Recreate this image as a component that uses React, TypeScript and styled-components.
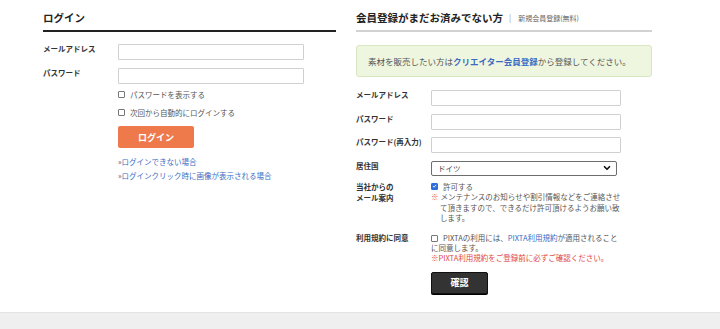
import React from "react";
import styled, { createGlobalStyle } from "styled-components";
import { ChevronDown } from "lucide-react";

const Global = createGlobalStyle`
  html, body { margin: 0; padding: 0; background: #fff; }
  body { font-family: "Noto Sans CJK JP", "Noto Sans", sans-serif; color: #333; }
  * { box-sizing: border-box; }
`;

const Page = styled.div`
  width: 720px;
  min-height: 329px;
  display: flex;
  flex-direction: column;
`;

const Main = styled.main`
  display: flex;
  align-items: flex-start;
  gap: 20px;
  padding: 0 0 18px 43px;
`;

const Column = styled.section<{ $w: number }>`
  width: ${(p) => p.$w}px;
  display: flex;
  flex-direction: column;
`;

const Heading = styled.h2<{ $line: string }>`
  margin: 0;
  padding-top: 6px;
  height: 32px;
  line-height: 24px;
  font-size: 10.5px;
  font-weight: 700;
  color: #222;
  border-bottom: 2px solid ${(p) => p.$line};
  display: flex;
  align-items: center;
  white-space: nowrap;
`;

const Sep = styled.span`
  color: #999;
  font-weight: 400;
  font-size: 8px;
  margin: 0 7px 0 6px;
`;

const Sub = styled.span`
  color: #666;
  font-weight: 400;
  font-size: 7px;
`;

const LoginForm = styled.div`
  margin-top: 12px;
  display: grid;
  grid-template-columns: 75px 186px;
  row-gap: 8px;
`;

const Label = styled.label<{ $shift?: number }>`
  font-size: 7.5px;
  line-height: 10px;
  font-weight: 700;
  color: #333;
  white-space: nowrap;
  margin-top: ${(p) => p.$shift ?? 0}px;
`;

const Input = styled.input<{ $w: number }>`
  display: block;
  width: ${(p) => p.$w}px;
  height: 16px;
  border: 1px solid #d0d0d0;
  border-radius: 1px;
  background: #fff;
  padding: 0 4px;
  font-size: 8px;
  outline: none;
`;

const CheckList = styled.div`
  grid-column: 2;
  display: flex;
  flex-direction: column;
  gap: 6px;
  margin-top: -4px;
`;

const CheckRow = styled.label`
  display: flex;
  align-items: center;
  gap: 5px;
  height: 12px;
  font-size: 7.5px;
  color: #555;
  white-space: nowrap;
`;

const Box = styled.span<{ $checked?: boolean }>`
  width: 7px;
  height: 7px;
  flex: none;
  border-radius: 1px;
  border: 1px solid ${(p) => (p.$checked ? "#2f6fdc" : "#777")};
  background: ${(p) => (p.$checked ? "#2f6fdc" : "#fff")};
  display: inline-flex;
  align-items: center;
  justify-content: center;
`;

const LoginButton = styled.button`
  grid-column: 2;
  width: 76px;
  height: 22px;
  border: none;
  border-radius: 2px;
  background: #ee7a4c;
  color: #fff;
  font-family: inherit;
  font-size: 9px;
  font-weight: 700;
  padding: 0;
`;

const Links = styled.div`
  grid-column: 2;
  display: flex;
  flex-direction: column;
  margin-top: -1px;
`;

const HelpLink = styled.a`
  font-size: 7.5px;
  line-height: 14px;
  color: #3a6cc4;
  text-decoration: none;
  white-space: nowrap;
  &::before { content: "»"; color: #555; }
`;

const Notice = styled.div`
  margin-top: 13px;
  height: 32px;
  border: 1px solid #d7e7bf;
  border-radius: 3px;
  background: #eef6df;
  padding-left: 11px;
  display: flex;
  align-items: center;
  font-size: 8.5px;
  color: #555;
  white-space: nowrap;
`;

const InlineLink = styled.a<{ $bold?: boolean }>`
  color: #3a6cc4;
  text-decoration: none;
  font-weight: ${(p) => (p.$bold ? 600 : 400)};
`;

const RegForm = styled.div`
  margin-top: 13px;
  display: grid;
  grid-template-columns: 75px 1fr;
  row-gap: 7.5px;
`;

const SelectWrap = styled.div`
  position: relative;
  width: 186px;
  height: 15px;
`;

const Select = styled.select`
  display: block;
  appearance: none;
  width: 100%;
  height: 15px;
  margin: 0;
  border: 1px solid #6d6d6d;
  border-radius: 2px;
  background: #fff;
  font-family: inherit;
  font-size: 7.5px;
  color: #444;
  padding: 0 0 0 6px;
  outline: none;
`;

const Chevron = styled.span`
  position: absolute;
  right: 5px;
  top: 2.5px;
  display: flex;
  pointer-events: none;
  color: #111;
`;

const MultiLabel = styled(Label)`
  line-height: 11px;
`;

const Field = styled.div`
  display: flex;
  flex-direction: column;
  margin-top: -3px;
`;

const Note = styled.p`
  margin: 0;
  padding-left: 9px;
  text-indent: -9px;
  font-size: 7.5px;
  line-height: 10.5px;
  color: #555;
  width: 190px;
  &::before { content: "※"; color: #e05a5a; margin-right: 2px; }
`;

const Terms = styled.div`
  margin-top: 2px;
  font-size: 7.5px;
  line-height: 10px;
  color: #555;
  width: 190px;
  display: flex;
  flex-direction: column;
  white-space: nowrap;
`;

const TermsLine = styled.div`
  display: flex;
  align-items: center;
`;

const InlineBox = styled(Box)`
  margin-right: 5px;
`;

const Warn = styled.div`
  color: #e04848;
`;

const ConfirmButton = styled.button`
  grid-column: 2;
  margin-top: 1px;
  width: 57px;
  height: 22px;
  border: 1px solid #111;
  border-radius: 2px;
  background: #333;
  color: #fff;
  font-family: inherit;
  font-size: 9px;
  font-weight: 700;
  padding: 0;
  box-shadow: 0 1px 0 #000;
`;

const Footer = styled.footer`
  height: 18px;
  margin-top: auto;
  background: #efefef;
  border-top: 1px solid #e3e3e3;
`;

const Check = () => (
  <svg width="6" height="6" viewBox="0 0 10 10">
    <path d="M2 5.2 L4.2 7.4 L8.2 2.8" fill="none" stroke="#fff" strokeWidth="1.8" />
  </svg>
);

export default function App() {
  return (
    <Page>
      <Global />
      <Main>
        <Column $w={293}>
          <Heading $line="#222">ログイン</Heading>
          <LoginForm>
            <Label>メールアドレス</Label>
            <Input $w={186} />
            <Label>パスワード</Label>
            <Input $w={186} type="password" />
            <CheckList>
              <CheckRow>
                <Box />
                パスワードを表示する
              </CheckRow>
              <CheckRow>
                <Box />
                次回から自動的にログインする
              </CheckRow>
            </CheckList>
            <LoginButton>ログイン</LoginButton>
            <Links>
              <HelpLink href="#">ログインできない場合</HelpLink>
              <HelpLink href="#">ログインクリック時に画像が表示される場合</HelpLink>
            </Links>
          </LoginForm>
        </Column>
        <Column $w={296}>
          <Heading $line="#d2d2d2">
            会員登録がまだお済みでない方<Sep>|</Sep>
            <Sub>新規会員登録(無料)</Sub>
          </Heading>
          <Notice>
            素材を販売したい方は<InlineLink $bold href="#">クリエイター会員登録</InlineLink>から登録してください。
          </Notice>
          <RegForm>
            <Label>メールアドレス</Label>
            <Input $w={190} />
            <Label>パスワード</Label>
            <Input $w={190} type="password" />
            <Label>パスワード(再入力)</Label>
            <Input $w={190} type="password" />
            <Label>居住国</Label>
            <SelectWrap>
              <Select defaultValue="de">
                <option value="de">ドイツ</option>
              </Select>
              <Chevron>
                <ChevronDown size={10} strokeWidth={4} />
              </Chevron>
            </SelectWrap>
            <MultiLabel $shift={-2}>
              当社からの
              <br />
              メール案内
            </MultiLabel>
            <Field>
              <CheckRow>
                <Box $checked>
                  <Check />
                </Box>
                許可する
              </CheckRow>
              <Note>
                メンテナンスのお知らせや割引情報などをご連絡させて頂きますので、できるだけ許可頂けるようお願い致します。
              </Note>
            </Field>
            <Label $shift={2}>利用規約に同意</Label>
            <Terms>
              <TermsLine>
                <InlineBox />
                <span>PIXTAの利用には、</span>
                <InlineLink href="#">PIXTA利用規約</InlineLink>
                <span>が適用されること</span>
              </TermsLine>
              <div>に同意します。</div>
              <Warn>※PIXTA利用規約をご登録前に必ずご確認ください。</Warn>
            </Terms>
            <ConfirmButton>確認</ConfirmButton>
          </RegForm>
        </Column>
      </Main>
      <Footer />
    </Page>
  );
}
